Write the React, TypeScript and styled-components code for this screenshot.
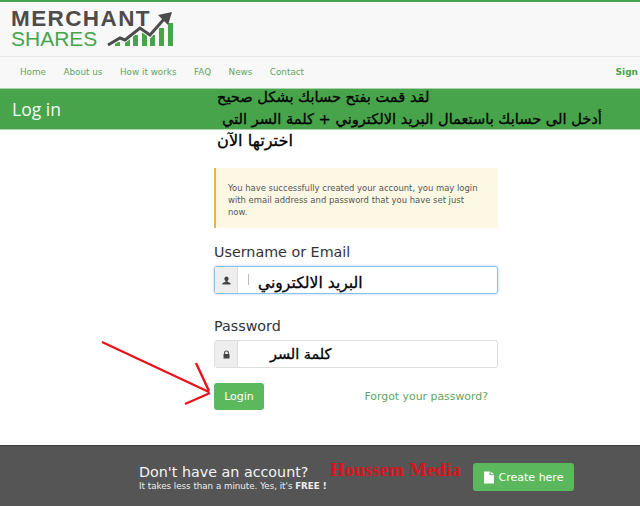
import styled, { createGlobalStyle } from "styled-components";

const GlobalStyle = createGlobalStyle`
  html, body {
    margin: 0;
    padding: 0;
    background: #fff;
    overflow: hidden;
  }
  * {
    box-sizing: border-box;
  }
`;

const Page = styled.div`
  position: relative;
  width: 640px;
  height: 506px;
  display: flex;
  flex-direction: column;
  font-family: "DejaVu Sans", sans-serif;
  color: #333;
  overflow: hidden;
`;

const Header = styled.header`
  border-top: 2px solid #47a44b;
  background: #f8f8f8;
`;

const LogoRow = styled.div`
  height: 55px;
  padding: 6px 0 0 11px;
  border-bottom: 1px solid #e7e7e7;
`;

const LogoMark = styled.div`
  position: relative;
  width: 165px;
  height: 44px;
  padding-top: 1px;
  display: flex;
  flex-direction: column;
  font-family: "Liberation Sans", sans-serif;
`;

const LogoTop = styled.span`
  font-weight: 700;
  font-size: 22.5px;
  line-height: 20px;
  letter-spacing: 1.4px;
  color: #4c4c4c;
`;

const LogoBottom = styled.span`
  font-size: 21px;
  line-height: 20px;
  color: #47a44b;
`;

const LogoChart = styled.svg`
  position: absolute;
  left: 96px;
  top: 2px;
`;

const Nav = styled.nav`
  height: 31px;
  display: flex;
  align-items: center;
  padding: 0 2px 1px 20px;
  gap: 17.5px;
  font-size: 8.8px;
  color: #5fa562;
`;

const SignLink = styled.a`
  margin-left: auto;
  font-size: 9px;
  font-weight: 700;
  color: #47a44b;
`;

const TitleBar = styled.div`
  height: 42px;
  background: #47a44b;
  border-top: 1px solid #a9d3aa;
  border-bottom: 1px solid #a9d3aa;
  display: flex;
  align-items: center;
  padding-left: 12px;
  font-family: "Open Sans", sans-serif;
  font-size: 17.5px;
  color: #f2f8f2;
`;

const Main = styled.main`
  flex: 1;
  width: 284px;
  margin-left: 214px;
  padding-top: 38px;
  display: flex;
  flex-direction: column;
`;

const Alert = styled.div`
  height: 60px;
  background: #fcf8e3;
  border-left: 2px solid #f0ad4e;
  padding: 14px 16px 0 12px;
  font-size: 8.45px;
  line-height: 12px;
  color: #555;
`;

const Label = styled.label<{ $top: number }>`
  display: block;
  margin-top: ${(p) => p.$top}px;
  height: 18px;
  font-size: 14.3px;
  line-height: 18px;
  color: #333;
`;

const InputGroup = styled.div<{ $focus?: boolean }>`
  display: flex;
  height: 28px;
  margin-top: 5px;
  border-radius: 3px;
  border: 1px solid ${(p) => (p.$focus ? "#8fc1e6" : "#ddd")};
  box-shadow: ${(p) => (p.$focus ? "0 0 3px rgba(102,175,233,.6)" : "none")};
  background: #fff;
`;

const Addon = styled.span`
  width: 23px;
  flex: none;
  background: #eee;
  border-right: 1px solid #ddd;
  display: flex;
  align-items: center;
  justify-content: center;
  color: #444;
`;

const Actions = styled.div`
  display: flex;
  align-items: center;
  justify-content: space-between;
  margin-top: 15px;
  padding-right: 10px;
`;

const LoginButton = styled.button`
  width: 50px;
  height: 27px;
  padding: 0;
  border: 0;
  border-radius: 3px;
  background: #5cb85c;
  color: #fff;
  font-family: inherit;
  font-size: 11px;
`;

const ForgotLink = styled.a`
  font-size: 10.9px;
  color: #5fa562;
`;

const Footer = styled.footer`
  height: 61px;
  background: #555;
  border-top: 1px solid #3c3c3c;
  display: flex;
  align-items: center;
  padding-left: 139px;
  color: #fff;
`;

const FooterText = styled.div`
  width: 334px;
  margin-top: 1px;
`;

const FooterTitle = styled.div`
  font-size: 14.3px;
  line-height: 18px;
  color: #f4f4f4;
`;

const FooterNote = styled.div`
  font-size: 8.7px;
  line-height: 10px;
  color: #eee;
`;

const CreateButton = styled.button`
  width: 101px;
  height: 28px;
  margin-top: 2px;
  padding: 0;
  border: 0;
  border-radius: 3px;
  background: #5cb85c;
  color: #fff;
  font-family: inherit;
  font-size: 11px;
  display: flex;
  align-items: center;
  justify-content: center;
  gap: 5px;
`;

/* Arabic captions and the watermark were pasted on top of the screenshot */
const Caption = styled.span<{ $x: number; $y: number; $size: number }>`
  position: absolute;
  left: ${(p) => p.$x}px;
  top: ${(p) => p.$y}px;
  font-family: "DejaVu Sans", sans-serif;
  font-size: ${(p) => p.$size}px;
  line-height: 18px;
  color: #000;
  direction: rtl;
  white-space: nowrap;
  -webkit-text-stroke: 0.3px #000;
`;

const Watermark = styled.span`
  position: absolute;
  left: 330px;
  top: 460px;
  font-family: "Liberation Serif", serif;
  font-weight: 700;
  font-size: 18.7px;
  line-height: 20px;
  letter-spacing: 0.2px;
  color: #d8141c;
`;

const Caret = styled.span`
  position: absolute;
  left: 248px;
  top: 274px;
  width: 1px;
  height: 11px;
  background: #bbb;
`;

const Arrow = styled.svg`
  position: absolute;
  left: 95px;
  top: 335px;
`;

const App = () => {
  return (
    <Page>
      <GlobalStyle />
      <Header>
        <LogoRow>
          <LogoMark>
            <LogoTop>MERCHANT</LogoTop>
            <LogoBottom>SHARES</LogoBottom>
            <LogoChart width="68" height="38" viewBox="0 0 68 38">
              <path
                d="M8 36v-4h5v4zM18 36v-8h5v8zM26 36v-11h5v11zM35 36v-13h5v13zM43 36v-11h5v11zM52 36v-18h5v18zM61 36v-23h5v23z"
                fill="#47a44b"
              />
              <path d="M1 35L13 28l5 2L33 18l10 7L56 10" fill="none" stroke="#f8f8f8" strokeWidth="5" />
              <path d="M1 35L13 28l5 2L33 18l10 7L58 8" fill="none" stroke="#4c4c4c" strokeWidth="3" />
              <path d="M51 5l14-3-4 13z" fill="#4c4c4c" />
            </LogoChart>
          </LogoMark>
        </LogoRow>
        <Nav>
          <span>Home</span>
          <span>About us</span>
          <span>How it works</span>
          <span>FAQ</span>
          <span>News</span>
          <span>Contact</span>
          <SignLink>Sign</SignLink>
        </Nav>
      </Header>
      <TitleBar>Log in</TitleBar>
      <Main>
        <Alert>
          You have successfully created your account, you may login with email address and password that you have set just now.
        </Alert>
        <Label $top={15}>Username or Email</Label>
        <InputGroup $focus>
          <Addon>
            <svg width="9" height="9" viewBox="0 0 9 9">
              <path d="M4.500 0.500c1.400 0 2.100 1 2.100 2.300 0 1-.5 1.800-1.100 2.200v.7L8.500 7v1.500h-8V7l3-1.300V5C2.900 4.600 2.400 3.800 2.400 2.800 2.400 1.500 3.100.5 4.500.5z" fill="#444" />
            </svg>
          </Addon>
        </InputGroup>
        <Label $top={23}>Password</Label>
        <InputGroup>
          <Addon>
            <svg width="9" height="9" viewBox="0 0 9 9">
              <path d="M1.500 4h.6V2.800C2.100 1.400 3.100.5 4.500.5s2.400.9 2.400 2.300V4h.6v4.500h-6zM3.100 4h2.800V2.800c0-.8-.6-1.300-1.400-1.300s-1.400.5-1.400 1.300z" fill="#444" />
            </svg>
          </Addon>
        </InputGroup>
        <Actions>
          <LoginButton>Login</LoginButton>
          <ForgotLink>Forgot your password?</ForgotLink>
        </Actions>
      </Main>
      <Footer>
        <FooterText>
          <FooterTitle>Don't have an account?</FooterTitle>
          <FooterNote>
            It takes less than a minute. Yes, it's <b>FREE !</b>
          </FooterNote>
        </FooterText>
        <CreateButton>
          <svg width="10" height="13" viewBox="0 0 9 11">
            <path d="M0 0h5v3.500h4V11H0zM6 0l3 2.500H6z" fill="#fff" />
          </svg>
          Create here
        </CreateButton>
      </Footer>

      <Caption $x={217} $y={88} $size={14.6}>لقد قمت بفتح حسابك بشكل صحيح</Caption>
      <Caption $x={222} $y={110} $size={14.6}>أدخل الى حسابك باستعمال البريد الالكتروني + كلمة السر التي</Caption>
      <Caption $x={217} $y={132} $size={16.2}>اخترتها الآن</Caption>
      <Caption $x={258} $y={274} $size={15.6}>البريد الالكتروني</Caption>
      <Caption $x={270} $y={345} $size={14.4}>كلمة السر</Caption>
      <Caret />
      <Watermark>Houssem Media</Watermark>
      <Arrow width="120" height="75" viewBox="0 0 120 75">
        <path d="M7 7L114 57M101 28l13 28M90 69l25-11" fill="none" stroke="#e8141c" strokeWidth="2.4" />
      </Arrow>
    </Page>
  );
};

export default App;
